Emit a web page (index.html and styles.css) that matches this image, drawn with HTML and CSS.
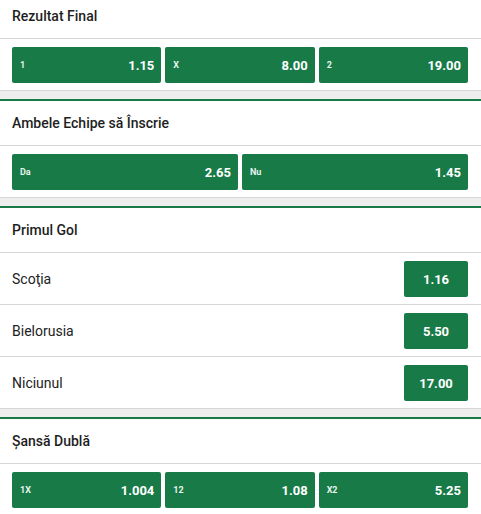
FILE: index.html
```html
<!DOCTYPE html>
<html lang="ro">
<head>
<meta charset="utf-8">
<title>Piețe</title>
<link rel="stylesheet" href="styles.css">
</head>
<body>
<div class="page">
  <section class="market">
    <div class="market-head">Rezultat Final</div>
    <div class="odds-row">
      <button class="odd"><span class="odd-label">1</span><span class="odd-value">1.15</span></button>
      <button class="odd"><span class="odd-label">X</span><span class="odd-value">8.00</span></button>
      <button class="odd"><span class="odd-label">2</span><span class="odd-value">19.00</span></button>
    </div>
  </section>
  <section class="market">
    <div class="market-head">Ambele Echipe să Înscrie</div>
    <div class="odds-row">
      <button class="odd"><span class="odd-label">Da</span><span class="odd-value">2.65</span></button>
      <button class="odd"><span class="odd-label">Nu</span><span class="odd-value">1.45</span></button>
    </div>
  </section>
  <section class="market">
    <div class="market-head">Primul Gol</div>
    <div class="list-row"><span class="list-name">Scoţia</span><button class="odd-small">1.16</button></div>
    <div class="list-row"><span class="list-name">Bielorusia</span><button class="odd-small">5.50</button></div>
    <div class="list-row"><span class="list-name">Niciunul</span><button class="odd-small">17.00</button></div>
  </section>
  <section class="market">
    <div class="market-head">Şansă Dublă</div>
    <div class="odds-row">
      <button class="odd"><span class="odd-label">1X</span><span class="odd-value">1.004</span></button>
      <button class="odd"><span class="odd-label">12</span><span class="odd-value">1.08</span></button>
      <button class="odd"><span class="odd-label">X2</span><span class="odd-value">5.25</span></button>
    </div>
  </section>
</div>
</body>
</html>
```

FILE: styles.css
```css
html, body {
  margin: 0;
  padding: 0;
}
body {
  background: #eeeeee;
  font-family: Roboto, "Liberation Sans", Arial, sans-serif;
  color: #222222;
  overflow: hidden;
}
.page {
  margin-top: -8px;
}
.market {
  background: #ffffff;
  border-top: 2px solid #177a47;
  border-bottom: 1px solid #d6d6d6;
  margin-bottom: 8px;
}
.market-head {
  height: 44px;
  display: flex;
  align-items: center;
  padding-left: 12px;
  font-size: 14px;
  font-weight: 500;
  color: #1e1e1e;
  border-bottom: 1px solid #d6d6d6;
}
.odds-row {
  display: flex;
  gap: 4px;
  padding: 8px 13px 7px 12px;
}
.odd {
  flex: 1 1 0;
  height: 36px;
  border: none;
  border-radius: 2px;
  background: #177a47;
  color: #ffffff;
  display: flex;
  align-items: center;
  justify-content: space-between;
  padding: 0 7px 0 8px;
  font-family: inherit;
  cursor: pointer;
}
.odd-label {
  font-size: 9px;
  font-weight: 700;
  color: #e8f3ec;
}
.odd-value {
  font-size: 13px;
  font-weight: 700;
}
.list-row {
  display: flex;
  align-items: center;
  justify-content: space-between;
  padding: 8px 13px 7px 12px;
  border-bottom: 1px solid #d6d6d6;
}
.list-row:last-child {
  border-bottom: none;
}
.list-name {
  font-size: 14px;
  color: #222222;
}
.odd-small {
  width: 64px;
  height: 36px;
  border: none;
  border-radius: 2px;
  background: #177a47;
  color: #ffffff;
  font-family: inherit;
  font-size: 13px;
  font-weight: 700;
  cursor: pointer;
}
```
